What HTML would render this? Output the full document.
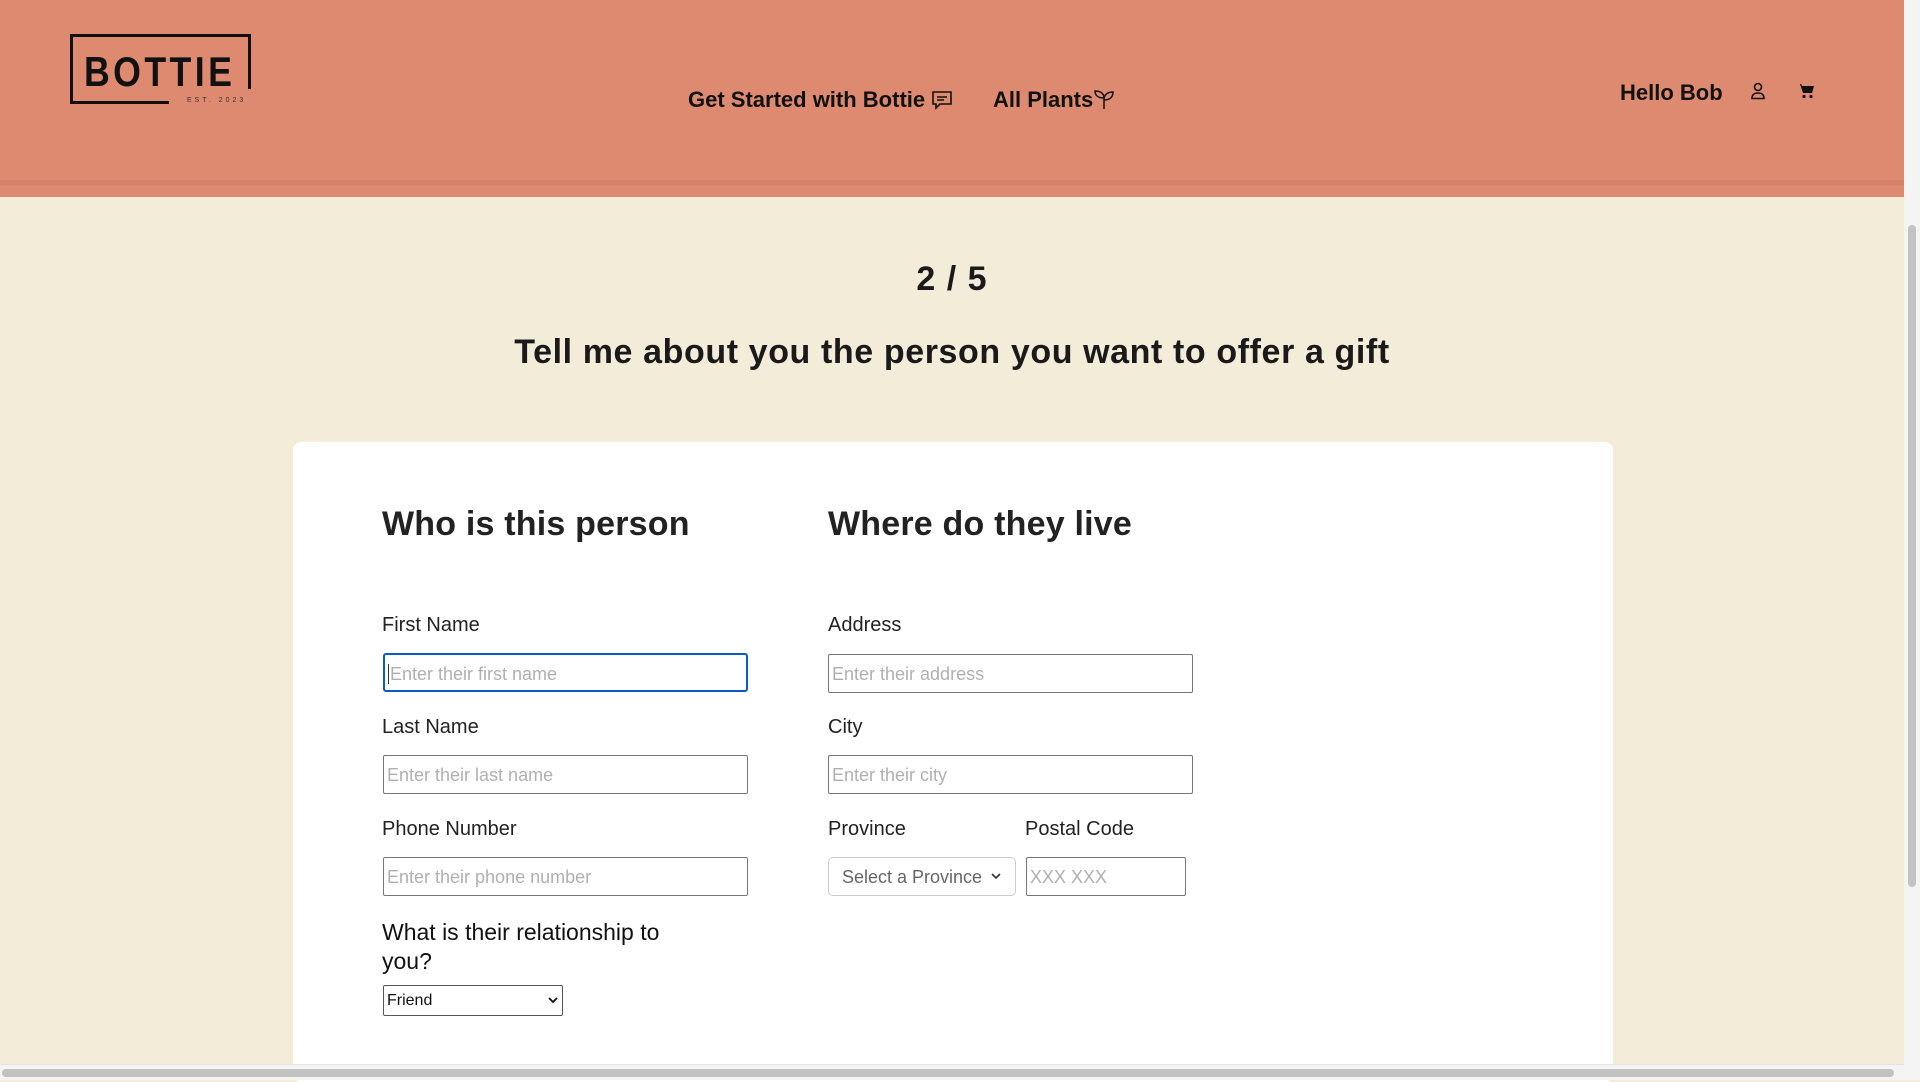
<!DOCTYPE html>
<html><head><meta charset="utf-8"><style>
*{box-sizing:border-box;margin:0;padding:0}
html,body{width:1920px;height:1080px;overflow:hidden;background:#f2ecd9;font-family:"Liberation Sans",sans-serif;color:#1a1a1a}
.hdr{position:absolute;left:0;top:0;width:1904px;height:197px;background:#dd8a70}
.hdr .ln{position:absolute;left:0;top:180px;width:1904px;height:5px;background:#cf7e66;opacity:.7}
.abs{position:absolute;white-space:nowrap}
.nav{font-weight:bold;font-size:22px;letter-spacing:0;color:#111}
.lbl{font-size:20px;color:#222}
.in{position:absolute;border:1px solid #777;border-radius:2px;background:#fff;height:39px;font-size:18px;color:#b0b0b0;padding:10px 3px;white-space:nowrap;line-height:18px}
.h2{font-weight:bold;font-size:34px;letter-spacing:.2px;color:#222}
.sbv{position:absolute;left:1904px;top:0;width:16px;height:1080px;background:#f4f4f4}
.sbv div{position:absolute;left:4px;top:225px;width:8px;height:662px;border-radius:4px;background:#c2c2c2}
.sbh{position:absolute;left:0;top:1064px;width:1904px;height:16px;background:#f4f4f4;border-top:1px solid #e4e4e4}
.sbh div{position:absolute;left:2px;top:4px;width:1892px;height:8px;border-radius:4px;background:#c2c2c2}
</style></head><body>
<div class="hdr"><div class="ln"></div></div>
<!-- logo -->
<div class="abs" style="left:70px;top:34px;width:181px;height:3px;background:#111"></div>
<div class="abs" style="left:70px;top:34px;width:3px;height:70px;background:#111"></div>
<div class="abs" style="left:248px;top:34px;width:3px;height:55px;background:#111"></div>
<div class="abs" style="left:70px;top:101px;width:99px;height:3px;background:#111"></div>
<div class="abs" style="left:84px;top:48px;font-size:42px;font-weight:bold;letter-spacing:4px;color:#111;transform:scaleX(.85);transform-origin:left top">BOTTIE</div>
<div class="abs" style="left:187px;top:97px;font-size:7px;letter-spacing:3px;color:#333">EST. 2023</div>
<!-- nav -->
<div class="abs nav" style="left:688px;top:87px">Get Started with Bottie</div>
<svg class="abs" style="left:931px;top:90px" width="22" height="20" viewBox="0 0 22 20" fill="none" stroke="#111" stroke-width="1.6"><path d="M2 2h18v12H9l-4 4v-4H2z"/><path d="M6 7h10M6 10h7"/></svg>
<div class="abs nav" style="left:993px;top:87px">All Plants</div>
<svg class="abs" style="left:1093px;top:88px" width="22" height="22" viewBox="0 0 22 22" fill="none" stroke="#111" stroke-width="1.5"><path d="M11 21V10M11 10C11 5 7 3 2 3c0 5 4 7 9 7zM11 12c0-5 3-8 9-8 0 5-3 8-9 8z"/></svg>
<div class="abs nav" style="left:1620px;top:80px">Hello Bob</div>
<svg class="abs" style="left:1750px;top:82px" width="16" height="18" viewBox="0 0 16 18" fill="none" stroke="#111" stroke-width="1.6"><circle cx="8" cy="5" r="3.5"/><path d="M2 16.5c0-4 2.5-5.5 6-5.5s6 1.5 6 5.5z"/></svg>
<svg class="abs" style="left:1797px;top:83px" width="18" height="16" viewBox="0 0 18 16" fill="#111"><path d="M0 1h3l3 9h9l2-7H5l-.6-2H0z"/><circle cx="7" cy="13.5" r="1.6"/><circle cx="14" cy="13.5" r="1.6"/></svg>
<!-- titles -->
<div class="abs" style="left:0;width:1904px;text-align:center;top:260px;font-size:34px;font-weight:bold;letter-spacing:1px">2 / 5</div>
<div class="abs" style="left:0;width:1904px;text-align:center;top:333px;font-size:34px;font-weight:bold;letter-spacing:.6px">Tell me about you the person you want to offer a gift</div>
<!-- card -->
<div class="abs" style="left:293px;top:442px;width:1320px;height:640px;background:#fff;border-radius:8px"></div>
<div class="abs h2" style="left:382px;top:505px">Who is this person</div>
<div class="abs h2" style="left:828px;top:505px">Where do they live</div>
<div class="abs lbl" style="left:382px;top:614px">First Name</div>
<div class="in" style="left:383px;top:653px;width:365px;border:2px solid #0a5bc4;border-radius:3px;padding-left:3px"><span style="border-left:1px solid #333;padding-left:1px">Enter their first name</span></div>
<div class="abs lbl" style="left:382px;top:716px">Last Name</div>
<div class="in" style="left:383px;top:755px;width:365px">Enter their last name</div>
<div class="abs lbl" style="left:382px;top:818px">Phone Number</div>
<div class="in" style="left:383px;top:857px;width:365px">Enter their phone number</div>
<div class="abs" style="left:382px;top:918px;font-size:23px;line-height:29px;white-space:normal;width:300px;color:#111">What is their relationship to you?</div>
<div class="abs" style="left:383px;top:985px;width:180px;height:31px;border:1px solid #555;border-radius:2px;background:#fff;font-size:16px;padding:6px 3px;color:#111">Friend<svg style="position:absolute;right:4px;top:11px" width="10" height="7" viewBox="0 0 10 7" fill="none" stroke="#111" stroke-width="1.8"><path d="M1 1l4 4 4-4"/></svg></div>
<div class="abs lbl" style="left:828px;top:614px">Address</div>
<div class="in" style="left:828px;top:654px;width:365px">Enter their address</div>
<div class="abs lbl" style="left:828px;top:716px">City</div>
<div class="in" style="left:828px;top:755px;width:365px">Enter their city</div>
<div class="abs lbl" style="left:828px;top:818px">Province</div>
<div class="abs lbl" style="left:1025px;top:818px">Postal Code</div>
<div class="in" style="left:828px;top:857px;width:188px;border:1px solid #ccc;border-radius:5px;color:#666;padding-left:13px">Select a Province<svg style="position:absolute;right:14px;top:15px" width="10" height="7" viewBox="0 0 10 7" fill="none" stroke="#333" stroke-width="1.6"><path d="M1 1l4 4 4-4"/></svg></div>
<div class="in" style="left:1026px;top:857px;width:160px">XXX XXX</div>
<div class="sbv"><div></div></div>
<div class="sbh"><div></div></div>
</body></html>
